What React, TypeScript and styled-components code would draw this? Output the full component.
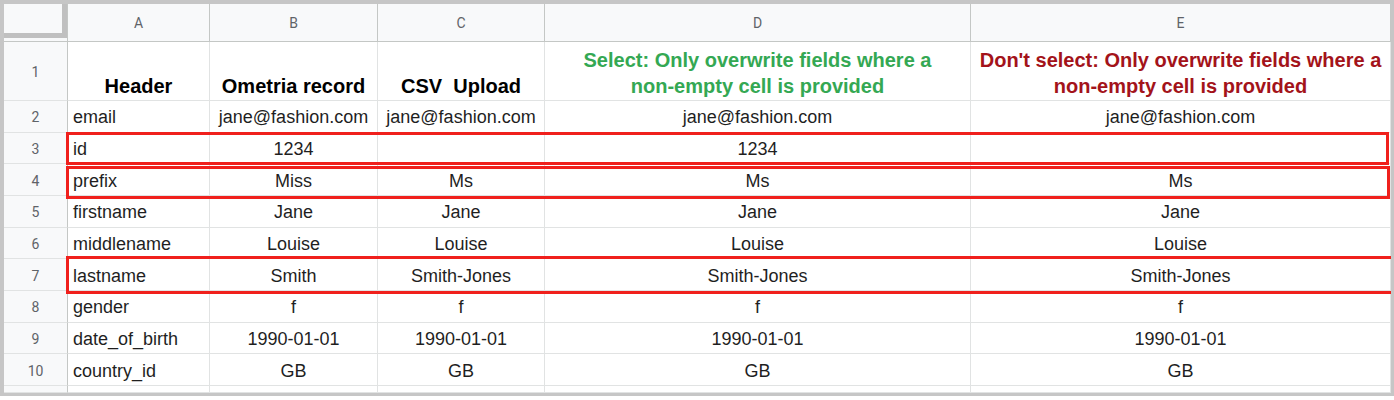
import React from "react";
import styled, { createGlobalStyle, css } from "styled-components";

const GlobalStyle = createGlobalStyle`
  html, body { margin: 0; padding: 0; background: #ffffff; }
  body { font-family: "Liberation Sans", Arial, sans-serif; }
`;

const Frame = styled.div`
  position: relative;
  width: 1394px;
  box-sizing: border-box;
  border-style: solid;
  border-color: #c6c6c6;
  border-width: 4px 3px 3px 4px;
  overflow: hidden;
  background: #ffffff;
`;

const Sheet = styled.div`
  display: grid;
  grid-template-columns: 64px 142px 168px 167px 426px 420px;
  grid-template-rows: 38px 59px repeat(9, 31.67px) 7px;
`;

const Corner = styled.div`
  background: #f8f9fa;
  border-right: 1px solid #c4c7c5;
  border-bottom: 1px solid #c4c7c5;
  box-sizing: border-box;
`;

const CornerHandle = styled.div`
  width: 63px;
  height: 34px;
  box-sizing: border-box;
  border-right: 5px solid #c0c0c0;
  border-bottom: 5px solid #c0c0c0;
  background: #f8f9fa;
`;

const ColHeader = styled.div`
  background: #f8f9fa;
  border-right: 1px solid #c4c7c5;
  border-bottom: 1px solid #c4c7c5;
  box-sizing: border-box;
  display: flex;
  align-items: center;
  justify-content: center;
  padding-top: 1px;
  font-family: Roboto, "Liberation Sans", Arial, sans-serif;
  font-size: 14px;
  color: #5f6368;
`;

const RowHeader = styled.div`
  background: #f8f9fa;
  border-right: 1px solid #c4c7c5;
  border-bottom: 1px solid #e1e3e3;
  box-sizing: border-box;
  display: flex;
  align-items: center;
  justify-content: center;
  padding-top: 2px;
  font-family: Roboto, "Liberation Sans", Arial, sans-serif;
  font-size: 14px;
  color: #5f6368;
`;

type CellProps = { $left?: boolean; $head?: boolean; $tone?: "green" | "red" };

const Cell = styled.div<CellProps>`
  border-right: 1px solid #e1e3e3;
  border-bottom: 1px solid #e1e3e3;
  box-sizing: border-box;
  display: flex;
  align-items: center;
  justify-content: ${(p) => (p.$left ? "flex-start" : "center")};
  padding: 3px 5px 0;
  font-size: 18px;
  color: #1f1f1f;
  white-space: nowrap;
  overflow: hidden;
  ${(p) =>
    p.$head &&
    css`
      align-items: flex-end;
      justify-content: center;
      text-align: center;
      padding: 0 4px 1px;
      font-size: 20px;
      font-weight: 700;
      line-height: 26px;
      color: #000000;
    `}
  ${(p) => p.$tone === "green" && css`color: #34a853;`}
  ${(p) => p.$tone === "red" && css`color: #a3131a;`}
`;

const Highlight = styled.div<{ $top: number; $height: number; $width: number; $open?: boolean }>`
  position: absolute;
  left: 62px;
  top: ${(p) => p.$top}px;
  width: ${(p) => p.$width}px;
  height: ${(p) => p.$height}px;
  box-sizing: border-box;
  border: 3px solid #f0201c;
  ${(p) => p.$open && css`border-right: none;`}
  pointer-events: none;
`;

const rows: string[][] = [
  ["email", "jane@fashion.com", "jane@fashion.com", "jane@fashion.com", "jane@fashion.com"],
  ["id", "1234", "", "1234", ""],
  ["prefix", "Miss", "Ms", "Ms", "Ms"],
  ["firstname", "Jane", "Jane", "Jane", "Jane"],
  ["middlename", "Louise", "Louise", "Louise", "Louise"],
  ["lastname", "Smith", "Smith-Jones", "Smith-Jones", "Smith-Jones"],
  ["gender", "f", "f", "f", "f"],
  ["date_of_birth", "1990-01-01", "1990-01-01", "1990-01-01", "1990-01-01"],
  ["country_id", "GB", "GB", "GB", "GB"],
];

export default function App() {
  return (
    <>
      <GlobalStyle />
      <Frame>
        <Sheet>
          <Corner>
            <CornerHandle />
          </Corner>
          {["A", "B", "C", "D", "E"].map((c) => (
            <ColHeader key={c}>{c}</ColHeader>
          ))}

          <RowHeader>1</RowHeader>
          <Cell $head>Header</Cell>
          <Cell $head>Ometria record</Cell>
          <Cell $head>CSV&nbsp;&nbsp;Upload</Cell>
          <Cell $head $tone="green">
            Select: Only overwrite fields where a
            <br />
            non-empty cell is provided
          </Cell>
          <Cell $head $tone="red">
            Don't select: Only overwrite fields where a
            <br />
            non-empty cell is provided
          </Cell>

          {rows.map((r, i) => (
            <React.Fragment key={i}>
              <RowHeader>{i + 2}</RowHeader>
              {r.map((v, j) => (
                <Cell key={j} $left={j === 0}>
                  {v}
                </Cell>
              ))}
            </React.Fragment>
          ))}

          <RowHeader />
          {[0, 1, 2, 3, 4].map((k) => (
            <Cell key={k} />
          ))}
        </Sheet>

        <Highlight $top={128} $height={33} $width={1323} />
        <Highlight $top={162} $height={33} $width={1324} />
        <Highlight $top={252} $height={38} $width={1326} $open />
      </Frame>
    </>
  );
}
